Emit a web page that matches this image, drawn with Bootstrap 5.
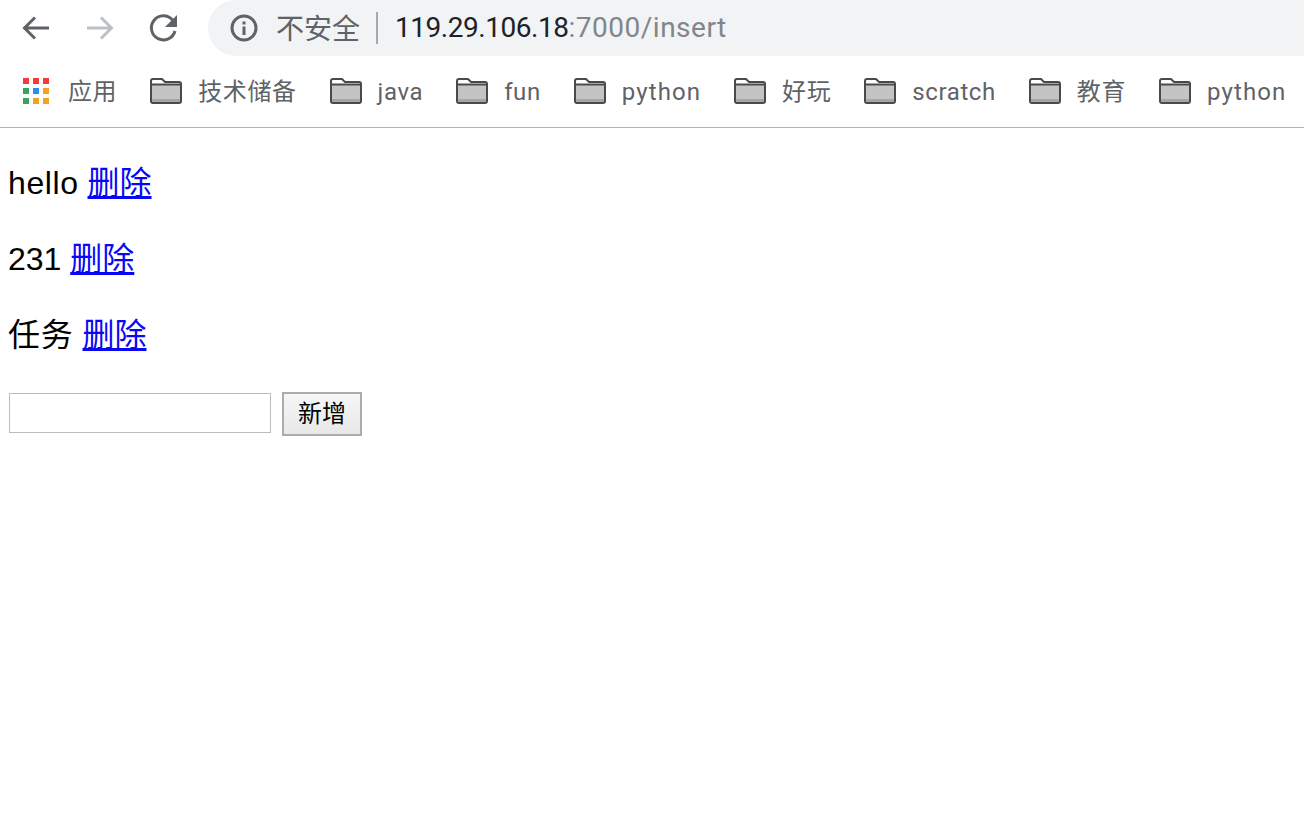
<!DOCTYPE html>
<html lang="zh-CN">
<head>
    <meta charset="UTF-8">
    <meta name="viewport" content="width=device-width, initial-scale=1.0">
    <title>insert</title>
    <link href="https://cdn.jsdelivr.net/npm/bootstrap@5.3.0/dist/css/bootstrap.min.css" rel="stylesheet">
    <style>
        body {
            background: #fff;
            color: #000;
            overflow: hidden;
            font-family: "Liberation Sans", "Noto Sans CJK SC", sans-serif;
        }

        .browser-top {
            height: 56px;
            padding-left: 20px;
        }

        .nav-ico {
            width: 32px;
            height: 32px;
            margin-right: 32px;
            flex: none;
        }

        .nav-ico:nth-child(3) {
            margin-right: 28px;
        }

        .addr-bar {
            height: 56px;
            background: #f1f3f4;
            border-radius: 28px 0 0 28px;
            padding-left: 22px;
            font-family: Roboto, "Noto Sans CJK SC", sans-serif;
            font-size: 28px;
            color: #80868b;
        }

        .addr-warn {
            color: #5f6368;
            font-size: 28px;
            margin: 3px 0 0 18px;
        }

        .addr-sep {
            width: 2px;
            height: 32px;
            background: #a8a9ab;
            margin: 0 17px 0 16px;
        }

        .addr-host {
            color: #202124;
            letter-spacing: -.46px;
        }

        .addr-path {
            letter-spacing: .5px;
        }

        .bm-bar {
            height: 72px;
            padding: 0 0 1px 23px;
            border-bottom: 1px solid #b4b4b4;
            gap: 33px;
            font-family: Roboto, "Noto Sans CJK SC", sans-serif;
            font-size: 24px;
            letter-spacing: .6px;
            color: #5f6368;
            white-space: nowrap;
        }

        .bm-item {
            gap: 16px;
        }

        .bm-item span {
            margin-top: 1px;
        }

        .bm-item svg {
            flex: none;
        }

        .bm-item.bm-wide {
            letter-spacing: 1.1px;
        }

        .apps-grid {
            width: 26px;
            height: 26px;
            margin-right: 3px;
            display: grid;
            grid-template-columns: repeat(3, 6px);
            grid-auto-rows: 6px;
            gap: 4px;
        }

        .page-body {
            padding: 1px 8px 0;
        }

        .todo-line {
            font-size: 32px;
            line-height: 44px;
            margin: 32px 0;
        }

        .todo-line a {
            color: #0808f6;
        }

        .todo-word {
            letter-spacing: .6px;
        }

        .todo-cjk {
            letter-spacing: .8px;
        }

        .add-form {
            padding-top: 3px;
        }

        .add-input {
            width: 262px;
            height: 40px;
            margin: 1px 0 0 1px;
            border: 1px solid #bdbdbd;
            background: #fff;
            padding: 2px 4px;
            font-size: 26px;
        }

        .add-btn {
            width: 80px;
            height: 44px;
            margin-left: 11px;
            border: 2px solid #acacac;
            background: linear-gradient(#f6f6f6, #e8e8e8);
            padding: 0;
            font-size: 24px;
            color: #000;
            line-height: 38px;
        }
    </style>
</head>
<body>

<div class="browser-top d-flex align-items-center">
    <svg class="nav-ico" viewBox="0 0 32 32" fill="none" stroke="#5f6368" stroke-width="3"><path d="M29 16H5M15 5.500 4.500 16 15 26.500"/></svg>
    <svg class="nav-ico" viewBox="0 0 32 32" fill="none" stroke="#bdc1c6" stroke-width="3"><path d="M3 16h24M17 5.500 27.500 16 17 26.500"/></svg>
    <svg class="nav-ico" viewBox="0 0 32 32" fill="none"><path d="M24.500 8A12 12 0 1 0 27 19" stroke="#5f6368" stroke-width="3"/><path d="M29 3v12H17z" fill="#5f6368"/></svg>
    <div class="addr-bar flex-grow-1 d-flex align-items-center">
        <svg width="28" height="28" viewBox="0 0 28 28" fill="none"><circle cx="14" cy="14" r="12" stroke="#5f6368" stroke-width="3"/><path d="M12.500 12.500h3V21h-3zM12.500 7.500h3v3h-3z" fill="#5f6368"/></svg>
        <span class="addr-warn">不安全</span>
        <span class="addr-sep"></span>
        <span><span class="addr-host">119.29.106.18</span><span class="addr-path">:7000/insert</span></span>
    </div>
</div>

<div class="bm-bar d-flex align-items-center overflow-hidden" id="bookmarks">
    <div class="bm-item d-flex align-items-center">
        <div class="apps-grid" id="apps"></div>
        <span>应用</span>
    </div>
</div>

<div class="page-body">
    <p class="todo-line"><span class="todo-word">hello</span> <a href="#">删除</a></p>
    <p class="todo-line">231 <a href="#">删除</a></p>
    <p class="todo-line"><span class="todo-cjk">任务</span> <a href="#">删除</a></p>
    <form class="add-form d-flex align-items-start">
        <input type="text" class="add-input">
        <button type="button" class="add-btn">新增</button>
    </form>
</div>

<script>
    const appColors = ["#f4393c", "#f4393c", "#f4393c", "#38a35c", "#2a8bf0", "#f3a025", "#38a35c", "#f3a025", "#f3a025"];
    const folders = ["技术储备", "java", "fun", "python", "好玩", "scratch", "教育", "python"];

    document.getElementById("apps").innerHTML = appColors.map(c => `<i style="background:${c}"></i>`).join("");

    const folderIcon = `<svg width="32" height="26" viewBox="0 0 32 26">
        <path d="M3 1h9l3 3h14a2 2 0 0 1 2 2v17a2 2 0 0 1-2 2H3a2 2 0 0 1-2-2V3a2 2 0 0 1 2-2z" fill="#fff" stroke="#4a4a4a" stroke-width="2"/>
        <path d="M2 7h28v17H2z" fill="#c4c4c4"/>
        <path d="M2 6.500h28" stroke="#4a4a4a" stroke-width="2"/>
        <path d="M2 21h28v3H2z" fill="#a6a6a6"/>
    </svg>`;

    document.getElementById("bookmarks").innerHTML += folders.map(name =>
        `<div class="bm-item d-flex align-items-center ${name === "python" ? "bm-wide" : ""}">${folderIcon}<span>${name}</span></div>`
    ).join("");
</script>

<script src="https://cdn.jsdelivr.net/npm/bootstrap@5.3.0/dist/js/bootstrap.bundle.min.js"></script>
</body>
</html>
